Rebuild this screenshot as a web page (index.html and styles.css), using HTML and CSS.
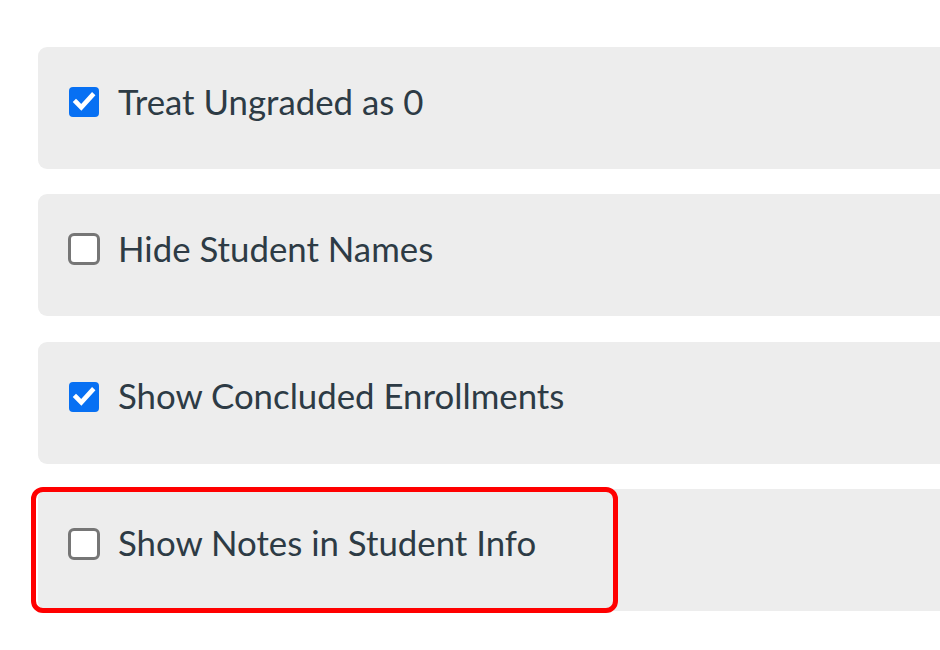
FILE: index.html
```html
<!DOCTYPE html>
<html>
<head>
<meta charset="utf-8">
<link rel="stylesheet" href="styles.css">
</head>
<body>
<div class="list">
  <div class="row">
    <span class="box checked"><svg viewBox="0 0 30 30" width="30" height="30"><path d="M7 15 L12.3 20.3 L23.2 8.3" fill="none" stroke="#fff" stroke-width="4.6" stroke-linecap="square" stroke-linejoin="miter"/></svg></span>
    <span class="label">Treat Ungraded as 0</span>
  </div>
  <div class="row">
    <span class="box"></span>
    <span class="label">Hide Student Names</span>
  </div>
  <div class="row">
    <span class="box checked"><svg viewBox="0 0 30 30" width="30" height="30"><path d="M7 15 L12.3 20.3 L23.2 8.3" fill="none" stroke="#fff" stroke-width="4.6" stroke-linecap="square" stroke-linejoin="miter"/></svg></span>
    <span class="label">Show Concluded Enrollments</span>
  </div>
  <div class="row highlighted">
    <span class="box"></span>
    <span class="label">Show Notes in Student Info</span>
    <span class="ring"></span>
  </div>
</div>
</body>
</html>
```

FILE: styles.css
```css
html, body {
  margin: 0;
  padding: 0;
  background: #ffffff;
  overflow: hidden;
}
body {
  width: 940px;
  height: 650px;
  font-family: Lato, "Liberation Sans", sans-serif;
}
.list {
  display: flex;
  flex-direction: column;
  gap: 25.3px;
  padding: 47px 0 0 38px;
}
.row {
  position: relative;
  height: 122px;
  background: #ededed;
  border-radius: 9px 0 0 9px;
  display: flex;
  align-items: center;
  padding: 0 0 12px 31px;
  box-sizing: border-box;
}
.box {
  width: 32px;
  height: 32px;
  margin: 0 -1px;
  box-sizing: border-box;
  border: 3px solid #767676;
  border-radius: 6px;
  background: #ffffff;
  flex: none;
}
.box.checked {
  width: 30px;
  height: 30px;
  margin: 0;
  border: none;
  background: #0770f3;
  border-radius: 4px;
}
.box svg {
  display: block;
}
.label {
  margin-left: 19px;
  font-size: 34.8px;
  color: #2d3b45;
  line-height: 1;
}
.ring {
  position: absolute;
  left: -7px;
  top: -2px;
  width: 587px;
  height: 126px;
  box-sizing: border-box;
  border: 5px solid #ff0000;
  border-radius: 12px;
}
```
